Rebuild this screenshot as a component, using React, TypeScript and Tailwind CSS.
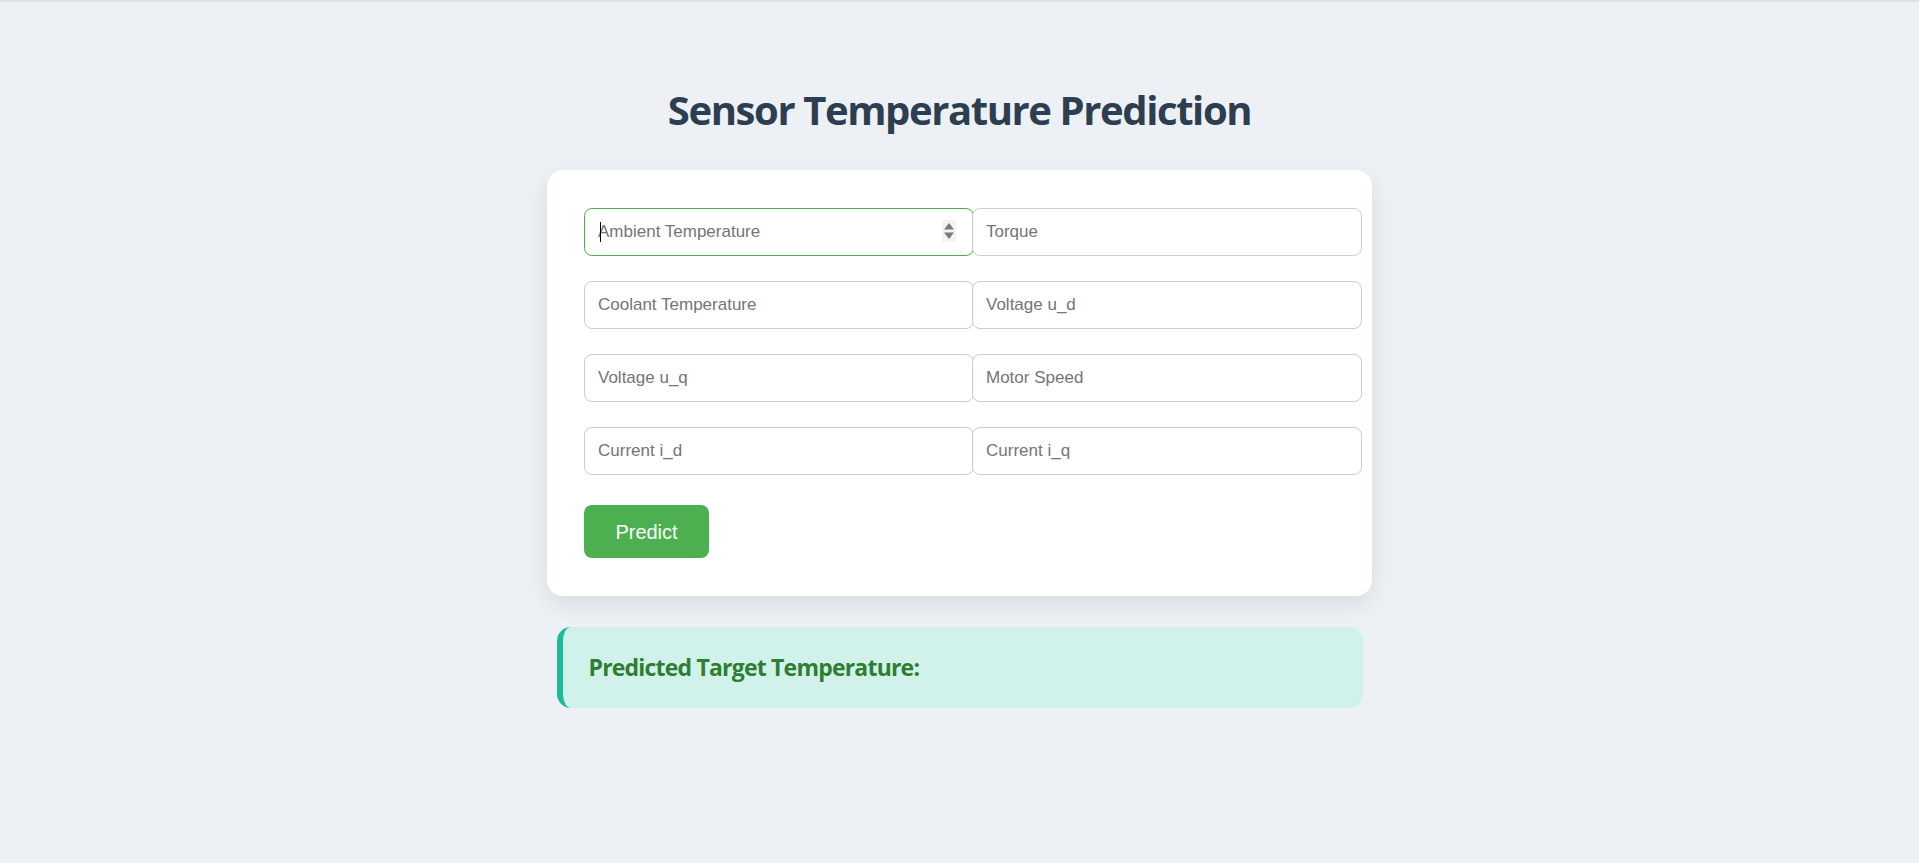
import React from "react";

const fields: [string, string][] = [
  ["Ambient Temperature", "Torque"],
  ["Coolant Temperature", "Voltage u_d"],
  ["Voltage u_q", "Motor Speed"],
  ["Current i_d", "Current i_q"],
];

function Field({ label, focused }: { label: string; focused?: boolean }) {
  return (
    <div className="relative w-[390px] h-[48px]">
      <input
        type="text"
        placeholder={label}
        readOnly
        className={
          "w-full h-full rounded-lg border bg-white pl-[13px] pr-3 text-[17px] outline-none placeholder:text-[#757575] " +
          (focused ? "border-[#4caf50]" : "border-[#cccccc]")
        }
        style={{ fontFamily: '"Liberation Sans", Arial, sans-serif' }}
      />
      {focused && (
        <>
          <span className="absolute left-[16px] top-[14px] h-[20px] w-px bg-black" />
          <svg
            className="absolute right-[18px] top-[12px]"
            width="14"
            height="22"
            viewBox="0 0 14 22"
          >
            <rect x="0" y="0" width="14" height="22" fill="#f3f3f3" />
            <polygon points="7,3 12,9.5 2,9.5" fill="#7a7a7a" />
            <polygon points="2,12.5 12,12.5 7,19" fill="#7a7a7a" />
          </svg>
        </>
      )}
    </div>
  );
}

export default function App() {
  return (
    <div className="min-h-screen w-full bg-[#edf0f5] border-t-2 border-[#dfe2e0] flex flex-col items-center pt-[84px]">
      <h1
        className="text-[40px] leading-[48px] font-bold text-[#2c3e50] tracking-[-1.4px]"
        style={{ fontFamily: '"Open Sans", "Noto Sans", sans-serif' }}
      >
        Sensor Temperature Prediction
      </h1>
      <div className="mt-[36px] w-[825px] rounded-2xl bg-white pt-[38px] pl-[37px] pb-[38px] shadow-[0_8px_24px_rgba(0,0,0,0.09)]">
        <div className="grid grid-cols-[388px_388px] gap-y-[25px]">
          {fields.map(([a, b], i) => (
            <React.Fragment key={i}>
              <Field label={a} focused={i === 0} />
              <Field label={b} />
            </React.Fragment>
          ))}
        </div>
        <button
          className="mt-[30px] w-[125px] h-[53px] rounded-lg bg-[#4caf50] text-white text-[20px]"
          style={{ fontFamily: '"Liberation Sans", Arial, sans-serif' }}
        >
          Predict
        </button>
      </div>
      <div className="mt-[31px] w-[806px] h-[81px] rounded-[14px] border-l-[6px] border-[#1abc9c] bg-[#d1f2eb] flex items-center pl-[26px]">
        <h3
          className="text-[23px] font-bold text-[#2e7d32] tracking-[-0.8px]"
          style={{ fontFamily: '"Open Sans", "Noto Sans", sans-serif' }}
        >
          Predicted Target Temperature:
        </h3>
      </div>
    </div>
  );
}
